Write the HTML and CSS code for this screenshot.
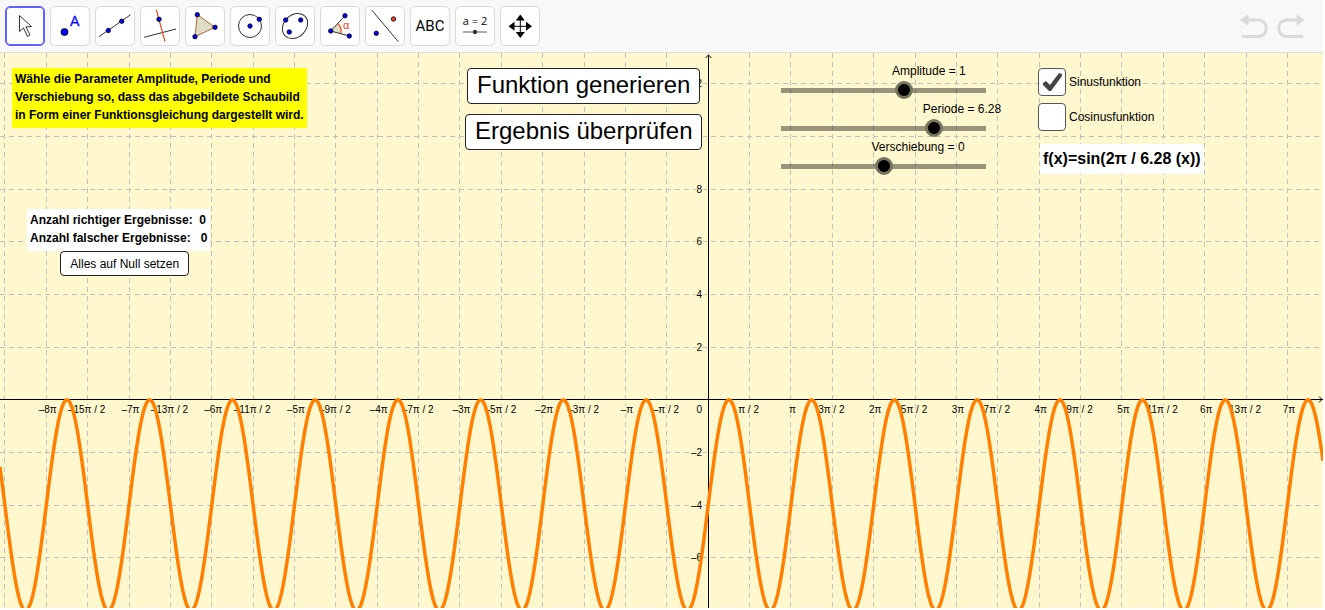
FILE: index.html
```html
<!DOCTYPE html>
<html lang="de">
<head>
    <meta charset="UTF-8">
    <meta name="viewport" content="width=device-width, initial-scale=1.0">
    <title>Sinus und Cosinus</title>
    <link rel="stylesheet" href="styles.css">
</head>
<body>

<header class="toolbar">
    <div class="tools">
        <button type="button" class="tool selected" aria-label="Bewege">
            <svg viewBox="0 0 38 38"><path d="M13.5 8.5V24.5L17.5 21L21.5 29.5L24 28L20 20L25.5 19.5Z" fill="#fff" stroke="#333"/></svg>
        </button>
        <button type="button" class="tool" aria-label="Punkt">
            <svg viewBox="0 0 38 38"><circle class="dot" cx="13.5" cy="25" r="3.5"/><text class="tool-a" x="19" y="19">A</text></svg>
        </button>
        <button type="button" class="tool" aria-label="Gerade">
            <svg viewBox="0 0 38 38"><path class="thin" d="M3 29.7L34.7 7.7"/><circle class="dot" cx="12.3" cy="23.5" r="2.2"/><circle class="dot" cx="25.7" cy="14.2" r="2.2"/></svg>
        </button>
        <button type="button" class="tool" aria-label="Senkrechte Gerade">
            <svg viewBox="0 0 38 38"><path class="thin" d="M3 30.3L35 22"/><path class="red" d="M15.3 2.7L24 34.7"/><circle class="dot" cx="18" cy="12.3" r="2.2"/></svg>
        </button>
        <button type="button" class="tool" aria-label="Vieleck">
            <svg viewBox="0 0 38 38"><path d="M11.3 7.7L29 20.3L9 29.7Z" fill="#deddc8" stroke="#b5622f"/><circle class="dot" cx="11.3" cy="7.7" r="2.2"/><circle class="dot" cx="29" cy="20.3" r="2.2"/><circle class="dot" cx="9" cy="29.7" r="2.2"/></svg>
        </button>
        <button type="button" class="tool" aria-label="Kreis">
            <svg viewBox="0 0 38 38"><circle class="thin" cx="19" cy="19" r="11.5"/><circle class="dot" cx="19" cy="19" r="2.2"/><circle class="dot" cx="28.3" cy="12.3" r="2.2"/></svg>
        </button>
        <button type="button" class="tool" aria-label="Ellipse">
            <svg viewBox="0 0 38 38"><ellipse class="thin" cx="19" cy="19" rx="14" ry="11" transform="rotate(-45 19 19)"/><circle class="dot" cx="9.7" cy="13" r="2.2"/><circle class="dot" cx="24.7" cy="13" r="2.2"/><circle class="dot" cx="13.3" cy="25" r="2.2"/></svg>
        </button>
        <button type="button" class="tool" aria-label="Winkel">
            <svg viewBox="0 0 38 38"><path d="M9.7 24L16.7 16.5Q21 20 20 26.3Z" fill="#deddc8"/><path class="red" d="M16.7 16.5Q21 20 20 26.3"/><path class="thin" d="M24 8.7L9.7 24L28.3 29"/><circle class="dot" cx="24" cy="8.7" r="2.2"/><circle class="dot" cx="9.7" cy="24" r="2.2"/><circle class="dot" cx="28.3" cy="29" r="2.2"/><text class="tool-alpha" x="22" y="22">α</text></svg>
        </button>
        <button type="button" class="tool" aria-label="Spiegele an Gerade">
            <svg viewBox="0 0 38 38"><path class="thin" d="M5.7 3L32.3 34.7"/><circle class="dot dot-red" cx="27.5" cy="12" r="2.2"/><circle class="dot" cx="10.3" cy="26.3" r="2.2"/></svg>
        </button>
        <button type="button" class="tool" aria-label="Text">
            <svg viewBox="0 0 38 38"><text class="tool-abc" x="19" y="24">ABC</text></svg>
        </button>
        <button type="button" class="tool" aria-label="Schieberegler">
            <svg viewBox="0 0 38 38"><text class="tool-eq" x="19" y="18">a = 2</text><path d="M7 25H31" stroke="#888" stroke-width="1.4"/><circle cx="19" cy="25" r="2.2" fill="#333"/></svg>
        </button>
        <button type="button" class="tool" aria-label="Verschiebe Zeichenblatt">
            <svg viewBox="0 0 38 38"><path d="M12 19.3H27M19.3 12V27" stroke="#000" fill="none"/><path d="M7.500 19.300L13.500 14.800V23.800ZM31 19.300L25 14.800V23.800ZM19.300 7.500L14.800 13.500H23.800ZM19.300 31L14.800 25H23.800Z"/></svg>
        </button>
    </div>
    <div class="history">
        <button type="button" class="history-button" aria-label="Rückgängig">
            <svg viewBox="0 0 28 24"><path class="bend" d="M7 6H18C29 6 29 22.500 18 22.500H3"/><path class="head" d="M0 6L8.500 0.200V11.800Z"/></svg>
        </button>
        <button type="button" class="history-button" aria-label="Wiederherstellen">
            <svg viewBox="0 0 28 24"><path class="bend" d="M21 6H10C-1 6 -1 22.500 10 22.500H25"/><path class="head" d="M28 6L19.500 0.200V11.800Z"/></svg>
        </button>
    </div>
</header>

<main class="board" id="board">
    <svg class="plot" id="plot" role="img" aria-label="Schaubild der Funktion"></svg>

    <p class="note task">Wähle die Parameter Amplitude, Periode und<br>Verschiebung so, dass das abgebildete Schaubild<br>in Form einer Funktionsgleichung dargestellt wird.</p>

    <div class="score">
        <p class="note counts">Anzahl richtiger Ergebnisse:&nbsp; 0<br>Anzahl falscher Ergebnisse:&nbsp;&nbsp; 0</p>
        <button type="button" class="board-button">Alles auf Null setzen</button>
    </div>

    <div class="actions">
        <button type="button" class="board-button large">Funktion generieren</button>
        <button type="button" class="board-button large">Ergebnis überprüfen</button>
    </div>

    <div class="sliders">
        <div class="slider">
            <label for="amplitude" style="margin-left: calc(60% - 12px)">Amplitude = 1</label>
            <input type="range" id="amplitude" min="-5" max="5" step="0.1" value="1">
        </div>
        <div class="slider">
            <label for="periode" style="margin-left: calc(75% - 12px)">Periode = 6.28</label>
            <input type="range" id="periode" min="0" max="8.4" step="0.01" value="6.28">
        </div>
        <div class="slider">
            <label for="verschiebung" style="margin-left: calc(50% - 12px)">Verschiebung = 0</label>
            <input type="range" id="verschiebung" min="-5" max="5" step="0.1" value="0">
        </div>
    </div>

    <div class="choices">
        <label class="choice"><input type="checkbox" checked>Sinusfunktion</label>
        <label class="choice"><input type="checkbox">Cosinusfunktion</label>
        <p class="formula">f(x)=sin(2π / 6.28 (x))</p>
    </div>
</main>

<script src="plot.js"></script>
</body>
</html>
```

FILE: styles.css
```css
* {
    box-sizing: border-box;
}
body {
    display: flex;
    flex-direction: column;
    height: 100vh;
    margin: 0;
    padding: 0 2px 2px 0;
    overflow: hidden;
    background: #fff;
    color: #000;
    font-family: "Liberation Sans", Arial, sans-serif;
    font-size: 12px;
    line-height: 18px;
}
p {
    margin: 0;
}
button {
    font-family: inherit;
    color: inherit;
    cursor: pointer;
}

/* toolbar */
.toolbar {
    display: flex;
    justify-content: space-between;
    align-items: center;
    height: 53px;
    padding: 0 18px 0 5px;
    background: #f8f8f8;
    border-bottom: 1px solid #dcdcdc;
}
.tools {
    display: flex;
    gap: 5px;
}
.tool {
    width: 40px;
    height: 40px;
    padding: 0;
    background: #fff;
    border: 1px solid #dadada;
    border-radius: 5px;
}
.tool svg {
    display: block;
    width: 38px;
    height: 38px;
}
.tool.selected {
    border-color: #6161ff;
    box-shadow: inset 0 0 0 1px #6161ff;
}
.dot {
    fill: #0000ff;
    stroke: #000;
    stroke-width: 0.8;
}
.dot-red {
    fill: #f04020;
}
.thin {
    fill: none;
    stroke: #333;
}
.red {
    fill: none;
    stroke: #ea4a1c;
    stroke-width: 1.2;
}
.tool-a {
    font: 15px "Open Sans", sans-serif;
    fill: #0000ff;
    stroke: #0000ff;
    stroke-width: 0.3;
}
.tool-alpha {
    font: 11px "Liberation Sans", sans-serif;
    fill: #ea4a1c;
}
.tool-abc {
    font: 15px Roboto, sans-serif;
    text-anchor: middle;
}
.tool-eq {
    font: 11px "Open Sans", sans-serif;
    text-anchor: middle;
}
.history {
    display: flex;
    gap: 9px;
}
.history-button {
    padding: 0;
    background: none;
    border: none;
}
.history-button svg {
    display: block;
    width: 28px;
    height: 24px;
}
.bend {
    fill: none;
    stroke: #dadada;
    stroke-width: 3;
    stroke-linecap: round;
}
.head {
    fill: #dadada;
}

/* drawing board */
.board {
    position: relative;
    flex: 1;
    min-height: 0;
    overflow: hidden;
    background: #fff8ce;
}
.plot {
    display: block;
    width: 100%;
    height: 100%;
}
.grid {
    stroke: #c0c0c0;
    stroke-dasharray: 5 4;
}
.axis {
    fill: none;
    stroke: #000;
}
.tick {
    font: 10px "Liberation Sans", Arial, sans-serif;
    stroke: #fff8ce;
    stroke-width: 3;
    paint-order: stroke;
}
.tick-x {
    text-anchor: middle;
}
.tick-y {
    text-anchor: end;
}
.curve {
    fill: none;
    stroke: #ff7f00;
    stroke-width: 3.5;
}

/* objects placed on the board */
.task,
.score,
.actions,
.sliders,
.choices {
    position: absolute;
}
.note {
    padding: 2px 3px 4px;
    font-weight: bold;
    white-space: nowrap;
}
.task {
    left: 12px;
    top: 15px;
    background: #ffff00;
}
.score {
    left: 27px;
    top: 156px;
    display: flex;
    flex-direction: column;
    align-items: center;
}
.counts {
    background: #fff;
}
.board-button {
    padding: 0 9px;
    height: 25px;
    background: #fff;
    border: 1px solid #222;
    border-radius: 4px;
    font-size: 12px;
}
.score .board-button {
    margin-right: -12px;
}
.board-button.large {
    height: 36px;
    padding-bottom: 2px;
    font-size: 24px;
}
.actions {
    left: 465px;
    top: 15px;
    display: flex;
    flex-direction: column;
    align-items: center;
    gap: 10px;
}
.sliders {
    left: 781px;
    top: 9px;
    width: 205px;
}
.slider {
    display: flex;
    flex-direction: column;
    align-items: flex-start;
    height: 38px;
}
.slider label {
    line-height: 18px;
    white-space: nowrap;
}
.slider input {
    appearance: none;
    width: 223px;
    height: 20px;
    margin: 0 -9px;
    background: linear-gradient(rgba(0, 0, 0, 0.4), rgba(0, 0, 0, 0.4)) center / 205px 5px no-repeat;
}
.slider input::-webkit-slider-thumb {
    appearance: none;
    width: 18px;
    height: 18px;
    background: #000;
    border: 3px solid #76735f;
    border-radius: 50%;
}
.choices {
    left: 1038px;
    top: 15px;
    display: flex;
    flex-direction: column;
    align-items: flex-start;
    gap: 7px;
}
.choice {
    display: flex;
    align-items: center;
    gap: 3px;
}
.choice input {
    appearance: none;
    width: 28px;
    height: 28px;
    margin: 0;
    background: #fff;
    border: 1px solid #555;
    border-radius: 4px;
}
.choice input:checked::before {
    content: "";
    display: block;
    width: 26px;
    height: 26px;
    background: #444;
    clip-path: polygon(4px 14px, 7px 12px, 11px 16px, 20px 4px, 23px 5px, 23px 7px, 12px 22px, 10px 22px, 4px 16px);
}
.formula {
    margin: 6px 0 0 2px;
    padding: 0 3px;
    background: #fff;
    font-size: 16px;
    font-weight: bold;
    line-height: 30px;
    white-space: nowrap;
}
```

FILE: plot.js
```js
const svg = document.getElementById('plot');
const originX = 708.2;
const originY = 346.9;
const unitX = 41.37;   // pixels per π / 2
const unitY = 26.33;   // pixels per 1

function add(tag, attrs, text) {
    const el = document.createElementNS('http://www.w3.org/2000/svg', tag);
    for (const name in attrs) {
        el.setAttribute(name, attrs[name]);
    }
    if (text !== undefined) {
        el.textContent = text;
    }
    svg.appendChild(el);
}

// n counts steps of π / 2
function piLabel(n) {
    const sign = n < 0 ? '–' : '';
    const m = Math.abs(n);
    if (m % 2 === 0) {
        return sign + (m === 2 ? '' : m / 2) + 'π';
    }
    return sign + (m === 1 ? '' : m) + 'π / 2';
}

function draw() {
    const width = svg.clientWidth;
    const height = svg.clientHeight;
    const axisX = Math.floor(originX) + 0.5;
    const axisY = Math.floor(originY) + 0.5;
    const firstX = Math.ceil(-originX / unitX);
    const lastX = Math.floor((width - originX) / unitX);
    const top = Math.floor(originY / unitY / 2) * 2;
    const bottom = -Math.floor((height - originY) / unitY / 2) * 2;

    svg.textContent = '';

    // grid
    for (let n = firstX; n <= lastX; n++) {
        const x = Math.floor(originX + n * unitX) + 0.5;
        add('path', { class: 'grid', d: `M${x} 0V${height}` });
    }
    for (let n = bottom; n <= top; n += 2) {
        const y = Math.floor(originY - n * unitY) + 0.5;
        add('path', { class: 'grid', d: `M0 ${y}H${width}` });
    }

    // labels
    for (let n = firstX + 1; n <= lastX; n++) {
        if (n !== 0) {
            const shift = n % 2 === 0 ? 1.5 : -1;
            add('text', { class: 'tick tick-x', x: originX + n * unitX + shift, y: 360 }, piLabel(n));
        }
    }
    for (let n = bottom; n <= top; n += 2) {
        if (n !== 0 && originY - n * unitY < height - 10) {
            const y = Math.floor(originY - n * unitY) + 4;
            add('text', { class: 'tick tick-y', x: 702, y: y }, String(n).replace('-', '–'));
        }
    }
    add('text', { class: 'tick tick-y', x: 702, y: 360 }, '0');

    // axes
    add('path', { class: 'axis', d: `M0 ${axisY}H${width}M${width - 4} ${axisY - 3}L${width - 1} ${axisY}L${width - 4} ${axisY + 3}` });
    add('path', { class: 'axis', d: `M${axisX} ${height}V2M${axisX - 3} 5L${axisX} 2L${axisX + 3} 5` });

    // f(x) = 4 sin(2x) - 4
    let d = '';
    for (let x = 0; x <= width; x++) {
        const t = (x - originX) / unitX * Math.PI / 2;
        const y = originY - (4 * Math.sin(2 * t) - 4) * unitY;
        d += (d ? 'L' : 'M') + x + ' ' + y.toFixed(2);
    }
    add('path', { class: 'curve', d: d });
}

draw();
window.addEventListener('resize', draw);
```
